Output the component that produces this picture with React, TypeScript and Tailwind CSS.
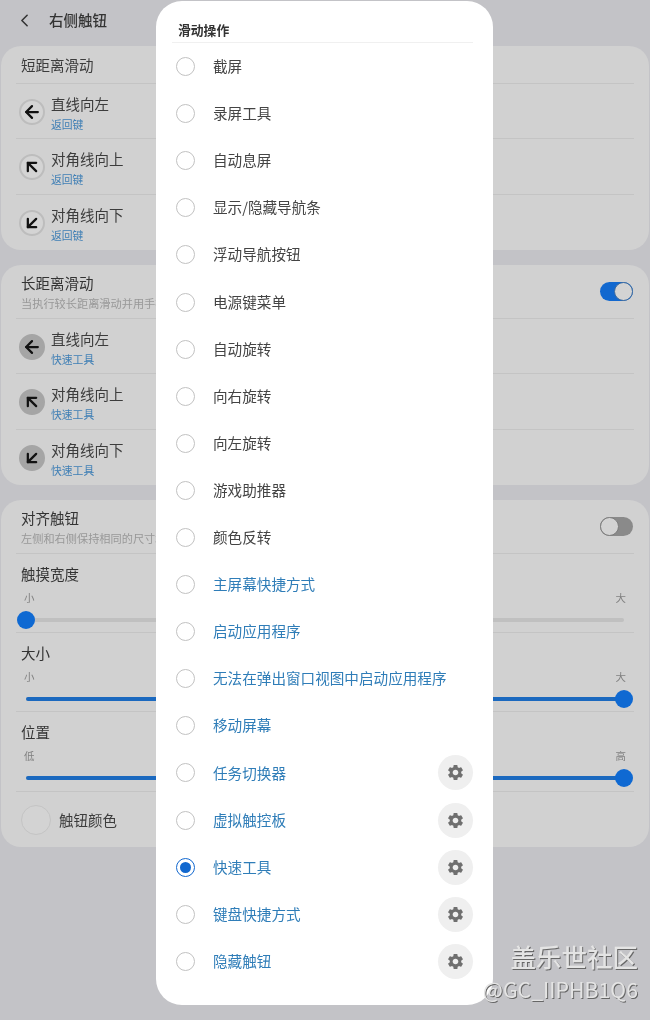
import { ArrowDownLeft, ArrowLeft, ArrowUpLeft, ChevronLeft } from "lucide-react";
import { MdSettings } from "react-icons/md";

const font = { fontFamily: '"Noto Sans CJK SC", "Noto Sans", sans-serif' };

function ArrowRow({ kind, sub, filled, last }: { kind: number; sub: string; filled?: boolean; last?: boolean }) {
  const Icon = kind === 0 ? ArrowLeft : kind === 1 ? ArrowUpLeft : ArrowDownLeft;
  const title = kind === 0 ? "直线向左" : kind === 1 ? "对角线向上" : "对角线向下";
  return (
    <div className={`h-[55.3px] flex items-center pl-[3px] ${last ? "" : "border-b border-[#c4c4c4]"}`}>
      <div
        className={`mt-[2px] w-[22px] h-[22px] rounded-full flex items-center justify-center box-content ${
          filled ? "bg-[#a5a5a5] border-2 border-[#a5a5a5]" : "border-2 border-[#bdbdbd] bg-[#d4d4d4]"
        }`}
      >
        <Icon size={20} strokeWidth={2.7} color="#111" />
      </div>
      <div className="ml-[6px] pt-[3px] flex flex-col">
        <span className="text-[14.5px] leading-[20px] text-[#3c3c3c]">{title}</span>
        <span className="text-[10.8px] leading-[15px] mt-[3px] text-[#3f7fb5]">{sub}</span>
      </div>
    </div>
  );
}

function Toggle({ on }: { on?: boolean }) {
  return (
    <div className={`relative w-[33px] h-[19px] rounded-full ${on ? "bg-[#1268cf]" : "bg-[#8a8a8a]"}`}>
      <div
        className={`absolute top-0 w-[19px] h-[19px] rounded-full bg-[#d3d3d3] border ${
          on ? "right-0 border-[#3d6a9e]" : "left-0 border-[#7d7d7d]"
        }`}
      />
    </div>
  );
}

function Slider({ title, lo, hi, value, height }: { title: string; lo: string; hi: string; value: number; height: string }) {
  return (
    <div className={`${height} border-b border-[#c4c4c4] flex flex-col`}>
      <div className="text-[14.5px] leading-[20px] text-[#333] pl-[5px] pt-[10px] box-content">{title}</div>
      <div className="flex justify-between px-[8px] mt-[6px] text-[10.5px] leading-[15px] text-[#808080]">
        <span>{lo}</span>
        <span>{hi}</span>
      </div>
      <div className="relative mx-[10px] mt-[13px] h-[4px] rounded-full bg-[#c0c0c0]">
        <div className="h-full rounded-full bg-[#1b69bf]" style={{ width: `${value}%` }} />
        <div
          className="absolute top-[-7px] ml-[-9px] w-[18px] h-[18px] rounded-full bg-[#0f69d2]"
          style={{ left: `${value}%` }}
        />
      </div>
    </div>
  );
}

const options = [
  "截屏", "录屏工具", "自动息屏", "显示/隐藏导航条", "浮动导航按钮", "电源键菜单", "自动旋转", "向右旋转", "向左旋转", "游戏助推器", "颜色反转",
  "主屏幕快捷方式", "启动应用程序", "无法在弹出窗口视图中启动应用程序", "移动屏幕", "任务切换器", "虚拟触控板", "快速工具", "键盘快捷方式", "隐藏触钮",
];

export default function App() {
  return (
    <div className="relative w-[650px] h-[1020px] overflow-hidden bg-[#c3c3c7] px-[1px] blur-[0.4px]" style={font}>
      <div className="h-[46px] flex items-start pt-[10px] pl-[13px]">
        <ChevronLeft size={21} strokeWidth={1.8} color="#333" />
        <span className="ml-[14px] text-[14.5px] leading-[20px] font-medium text-[#333]">右侧触钮</span>
      </div>

      <div className="h-[204px] rounded-[20px] bg-[#d1d1d1] px-[15px]">
        <div className="h-[38px] flex items-center pl-[5px] border-b border-[#c4c4c4] text-[14.5px] text-[#3c3c3c]">短距离滑动</div>
        <ArrowRow kind={0} sub="返回键" />
        <ArrowRow kind={1} sub="返回键" />
        <ArrowRow kind={2} sub="返回键" last />
      </div>

      <div className="mt-[15px] h-[220px] rounded-[20px] bg-[#d1d1d1] px-[15px]">
        <div className="h-[54px] flex items-center justify-between pl-[5px] pr-[1px] border-b border-[#c4c4c4]">
          <div className="flex flex-col whitespace-nowrap pt-[2px]">
            <span className="text-[14.5px] leading-[20px] text-[#333]">长距离滑动</span>
            <span className="text-[11.2px] leading-[17px] mt-[2px] text-[#989898]">当执行较长距离滑动并用手指按住时</span>
          </div>
          <Toggle on />
        </div>
        <ArrowRow kind={0} sub="快速工具" filled />
        <ArrowRow kind={1} sub="快速工具" filled />
        <ArrowRow kind={2} sub="快速工具" filled last />
      </div>

      <div className="mt-[15px] h-[347px] rounded-[20px] bg-[#d1d1d1] px-[15px]">
        <div className="h-[54px] flex items-center justify-between pl-[5px] pr-[1px] border-b border-[#c4c4c4]">
          <div className="flex flex-col whitespace-nowrap pt-[2px]">
            <span className="text-[14.5px] leading-[20px] text-[#333]">对齐触钮</span>
            <span className="text-[11.2px] leading-[17px] mt-[2px] text-[#989898]">左侧和右侧保持相同的尺寸和位置</span>
          </div>
          <Toggle />
        </div>
        <Slider title="触摸宽度" lo="小" hi="大" value={0} height="h-[79px]" />
        <Slider title="大小" lo="小" hi="大" value={100} height="h-[79px]" />
        <Slider title="位置" lo="低" hi="高" value={100} height="h-[80px]" />
        <div className="h-[55px] flex items-center pl-[5px]">
          <div className="w-[30px] h-[30px] rounded-full border border-[#c4c4c4] bg-[#d3d3d3]" />
          <span className="ml-[8px] text-[14.5px] text-[#3c3c3c]">触钮颜色</span>
        </div>
      </div>

      <div className="absolute left-[156px] top-[1px] w-[337px] h-[1004px] rounded-[26px] bg-white pl-[16px] pr-[20px]">
        <div className="h-[42px] pt-[19px] box-border border-b border-[#f0f0f0] ml-0 pl-[6px]">
          <div className="text-[12.8px] leading-[20px] font-bold text-[#333]">滑动操作</div>
        </div>
        {options.map((label, i) => (
          <div key={label} className="h-[47.1px] flex items-center">
            <div
              className={`ml-[4px] w-[19px] h-[19px] shrink-0 rounded-full border-[1.5px] flex items-center justify-center ${
                i === 17 ? "border-[#1268cf]" : "border-[#c2c2c2]"
              }`}
            >
              {i === 17 && <div className="w-[11px] h-[11px] rounded-full bg-[#1268cf]" />}
            </div>
            <span className={`ml-[18px] mb-[1px] flex-1 text-[14.6px] whitespace-nowrap ${i < 11 ? "text-[#444]" : "text-[#2f7db8]"}`}>{label}</span>
            {i >= 15 && (
              <div className="w-[35px] h-[35px] rounded-full bg-[#efefef] flex items-center justify-center">
                <MdSettings size={19} color="#6f6f6f" />
              </div>
            )}
          </div>
        ))}
      </div>

      <div className="absolute right-[12px] top-[938px] text-right text-[#e4e4e4] [text-shadow:1px_1px_0_#666]">
        <div className="text-[25.5px] leading-[36px] font-medium whitespace-nowrap">盖乐世社区</div>
        <div className="text-[21.3px] leading-[26px] mt-[2px] whitespace-nowrap">@GC_IIPHB1Q6</div>
      </div>
    </div>
  );
}
